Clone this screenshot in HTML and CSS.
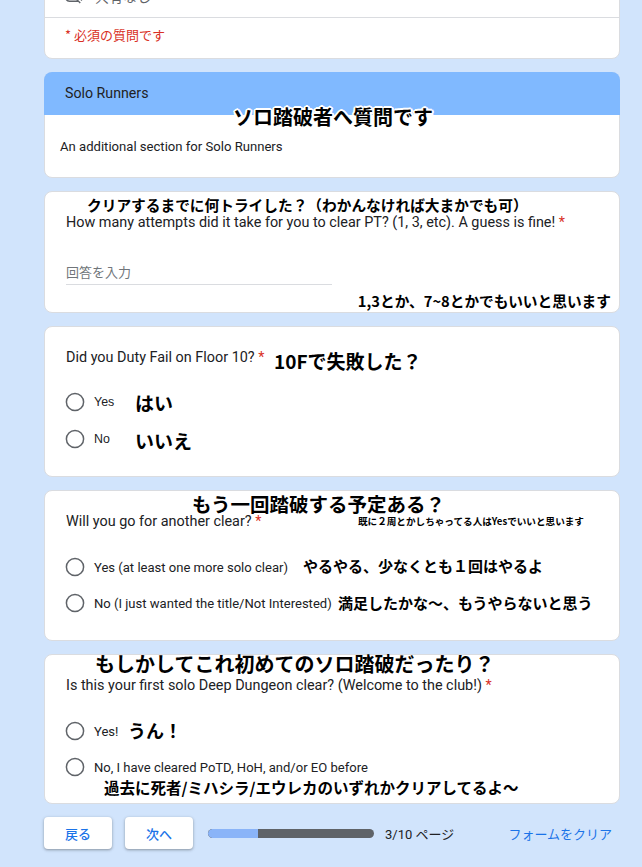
FILE: index.html
```html
<!DOCTYPE html>
<html lang="ja">
<head>
<meta charset="utf-8">
<title>Solo Runners</title>
<link rel="stylesheet" href="styles.css">
</head>
<body>
<div class="page">
  <section class="card card-top">
    <div class="account-row">
      <svg class="cloud" width="18" height="18" viewBox="0 0 24 24"><path fill="#5f6368" d="M19.35 10.04A7.49 7.49 0 0 0 12 4c-1.48 0-2.85.43-4.01 1.17l1.46 1.46A5.497 5.497 0 0 1 17.5 11v.5H19c1.66 0 3 1.34 3 3 0 1.13-.64 2.11-1.56 2.62l1.45 1.45C23.16 17.66 24 16.17 24 14.5c0-2.64-2.05-4.78-4.65-4.96zM3 5.27l2.75 2.74C2.56 8.15 0 10.770 0 14c0 3.31 2.69 6 6 6h11.73l2 2L21 20.73 4.27 4 3 5.27zM7.73 10l8 8H6c-2.21 0-4-1.79-4-4s1.79-4 4-4h1.73z"/></svg>
      <span>共有なし</span>
    </div>
    <div class="required-note">* 必須の質問です</div>
  </section>

  <section class="card section-card">
    <div class="section-head">Solo Runners</div>
    <div class="section-desc">An additional section for Solo Runners</div>
    <div class="note note-title">ソロ踏破者へ質問です</div>
  </section>

  <section class="card q-card q-text">
    <div class="q-title">How many attempts did it take for you to clear PT? (1, 3, etc). A guess is fine! <span class="req">*</span></div>
    <div class="answer">回答を入力</div>
    <div class="hint-right">1,3とか、7~8とかでもいいと思います</div>
    <div class="note note-tries">クリアするまでに何トライした？（わかんなければ大まかでも可）</div>
  </section>

  <section class="card q-card q-fail">
    <div class="q-title">Did you Duty Fail on Floor 10? <span class="req">*</span></div>
    <div class="options">
      <label class="opt"><svg class="radio" width="20" height="20" viewBox="0 0 20 20"><circle cx="10" cy="10" r="8.6" fill="none" stroke="#5f6368" stroke-width="1.5"/></svg><span class="opt-label arial">Yes</span></label>
      <label class="opt"><svg class="radio" width="20" height="20" viewBox="0 0 20 20"><circle cx="10" cy="10" r="8.6" fill="none" stroke="#5f6368" stroke-width="1.5"/></svg><span class="opt-label arial">No</span></label>
    </div>
    <div class="note note-10f">10Fで失敗した？</div>
    <div class="note note-hai">はい</div>
    <div class="note note-iie">いいえ</div>
  </section>

  <section class="card q-card q-again">
    <div class="q-title">Will you go for another clear? <span class="req">*</span></div>
    <div class="options">
      <label class="opt"><svg class="radio" width="20" height="20" viewBox="0 0 20 20"><circle cx="10" cy="10" r="8.6" fill="none" stroke="#5f6368" stroke-width="1.5"/></svg><span class="opt-label">Yes (at least one more solo clear)</span></label>
      <label class="opt"><svg class="radio" width="20" height="20" viewBox="0 0 20 20"><circle cx="10" cy="10" r="8.6" fill="none" stroke="#5f6368" stroke-width="1.5"/></svg><span class="opt-label">No (I just wanted the title/Not Interested)</span></label>
    </div>
    <div class="note note-again">もう一回踏破する予定ある？</div>
    <div class="note note-tiny">既に２周とかしちゃってる人はYesでいいと思います</div>
    <div class="note note-yaru">やるやる、少なくとも１回はやるよ</div>
    <div class="note note-manzoku">満足したかな～、もうやらないと思う</div>
  </section>

  <section class="card q-card q-first">
    <div class="q-title">Is this your first solo Deep Dungeon clear? (Welcome to the club!) <span class="req">*</span></div>
    <div class="options">
      <label class="opt"><svg class="radio" width="20" height="20" viewBox="0 0 20 20"><circle cx="10" cy="10" r="8.6" fill="none" stroke="#5f6368" stroke-width="1.5"/></svg><span class="opt-label">Yes!</span></label>
      <label class="opt"><svg class="radio" width="20" height="20" viewBox="0 0 20 20"><circle cx="10" cy="10" r="8.6" fill="none" stroke="#5f6368" stroke-width="1.5"/></svg><span class="opt-label">No, I have cleared PoTD, HoH, and/or EO before</span></label>
    </div>
    <div class="note note-first">もしかしてこれ初めてのソロ踏破だったり？</div>
    <div class="note note-un">うん！</div>
    <div class="note note-kako">過去に死者/ミハシラ/エウレカのいずれかクリアしてるよ～</div>
  </section>

  <footer class="nav">
    <button class="btn">戻る</button>
    <button class="btn">次へ</button>
    <div class="progress"><div class="progress-fill" style="width:50px"></div></div>
    <span class="page-count">3/10 ページ</span>
    <a class="clear-link">フォームをクリア</a>
  </footer>
</div>
</body>
</html>
```

FILE: styles.css
```css
html, body {
  margin: 0;
  padding: 0;
}
body {
  background: #d1e4fc;
  font-family: Roboto, "Noto Sans CJK JP", sans-serif;
  color: #202124;
  overflow: hidden;
  height: 867px;
}
.page {
  width: 576px;
  margin-left: 44px;
  margin-top: -42px;
  display: flex;
  flex-direction: column;
  gap: 13px;
}
.card {
  position: relative;
  background: #fff;
  border: 1px solid #dadce0;
  border-radius: 8px;
  box-sizing: border-box;
  flex: none;
}

/* top card */
.card-top {
  height: 101px;
}
.account-row {
  display: flex;
  align-items: center;
  gap: 12px;
  height: 59px;
  box-sizing: border-box;
  padding: 16px 0 0 20px;
  border-bottom: 1px solid #dadce0;
  font-size: 14px;
  color: #5f6368;
}
.account-row span {
  font-family: "Noto Sans CJK JP", sans-serif;
}
.required-note {
  padding: 7px 0 0 20px;
  line-height: 20px;
  font-size: 13px;
  color: #d93025;
  font-family: "Noto Sans CJK JP", sans-serif;
}

/* section card */
.section-card {
  height: 106px;
}
.section-head {
  background: #80b9ff;
  height: 43px;
  line-height: 43px;
  margin: -1px -1px 0;
  padding-left: 21px;
  border-radius: 8px 8px 0 0;
  font-size: 14.2px;
  color: #202124;
}
.section-desc {
  padding: 23px 0 0 15px;
  line-height: 18px;
  font-size: 13.1px;
}

/* questions */
.q-card {
  padding: 21px 8px 0 21px;
}
.q-title {
  line-height: 20px;
  font-size: 14.4px;
}
.req {
  color: #d93025;
}
.q-text {
  height: 122px;
}
.answer {
  width: 266px;
  margin-top: 29px;
  line-height: 20px;
  padding-bottom: 2px;
  border-bottom: 1px solid #dadce0;
  font-size: 13px;
  color: #70757a;
  font-family: "Noto Sans CJK JP", sans-serif;
}
.hint-right {
  margin-top: 6px;
  text-align: right;
  line-height: 20px;
  font-size: 14.7px;
  font-weight: 700;
  color: #000;
  font-family: "Noto Sans CJK JP", sans-serif;
}

.options {
  display: flex;
  flex-direction: column;
  gap: 12px;
  margin-top: 22px;
}
.opt {
  display: flex;
  align-items: center;
  gap: 9px;
  height: 24px;
  margin-left: -1px;
}
.radio {
  flex: none;
}
.opt-label {
  font-size: 13.05px;
  color: #202124;
}
.opt-label.arial {
  font-family: "Liberation Sans", Arial, sans-serif;
  font-size: 12.4px;
}
.q-fail { height: 151px; }
.q-fail .options { gap: 13px; }
.q-again { height: 151px; }
.q-again .options { margin-top: 23px; }
.q-first { height: 150px; }
.q-first .options { margin-top: 23px; }

/* annotations laid over the form */
.note {
  position: absolute;
  white-space: nowrap;
  font-family: "Noto Sans CJK JP", sans-serif;
  font-weight: 700;
  color: #000;
  line-height: 1;
}
.note-title {
  left: 188px;
  top: 34px;
  font-size: 20px;
  text-shadow:
    2px 0 0 #fff, -2px 0 0 #fff, 0 2px 0 #fff, 0 -2px 0 #fff,
    1.5px 1.5px 0 #fff, -1.5px 1.5px 0 #fff, 1.5px -1.5px 0 #fff, -1.5px -1.5px 0 #fff;
}
.note-tries { left: 42px; top: 6px; font-size: 14.7px; }
.note-10f { left: 229px; top: 24px; font-size: 19px; }
.note-hai { left: 90px; top: 66px; font-size: 19px; }
.note-iie { left: 90px; top: 104px; font-size: 19px; }
.note-again { left: 147px; top: 3px; font-size: 19.5px; }
.note-tiny { left: 313px; top: 26px; font-size: 9.6px; }
.note-yaru { left: 258px; top: 67px; font-size: 15px; }
.note-manzoku { left: 293px; top: 104px; font-size: 15px; }
.note-first { left: 50px; top: -1px; font-size: 20px; }
.note-un { left: 83px; top: 66px; font-size: 18px; }
.note-kako { left: 59px; top: 125px; font-size: 15.5px; }

/* footer nav */
.nav {
  display: flex;
  align-items: center;
  height: 32px;
}
.btn {
  width: 68px;
  height: 32px;
  border: none;
  border-radius: 4px;
  background: #fff;
  box-shadow: 0 1px 2px rgba(60,64,67,.3), 0 1px 3px 1px rgba(60,64,67,.15);
  color: #1a73e8;
  font-family: "Noto Sans CJK JP", sans-serif;
  font-size: 13px;
  font-weight: 500;
  padding: 0;
  margin-right: 13px;
}
.btn + .btn { margin-right: 15px; }
.progress {
  width: 166px;
  height: 9px;
  border-radius: 5px;
  background: #5f6368;
  overflow: hidden;
}
.progress-fill {
  height: 100%;
  background: #8ab4f8;
  border-radius: 5px 0 0 5px;
}
.page-count {
  margin-left: 11px;
  font-size: 13px;
  color: #202124;
}
.clear-link {
  margin-left: auto;
  margin-right: 8px;
  font-size: 13px;
  color: #1a73e8;
  font-family: "Noto Sans CJK JP", sans-serif;
}
```
